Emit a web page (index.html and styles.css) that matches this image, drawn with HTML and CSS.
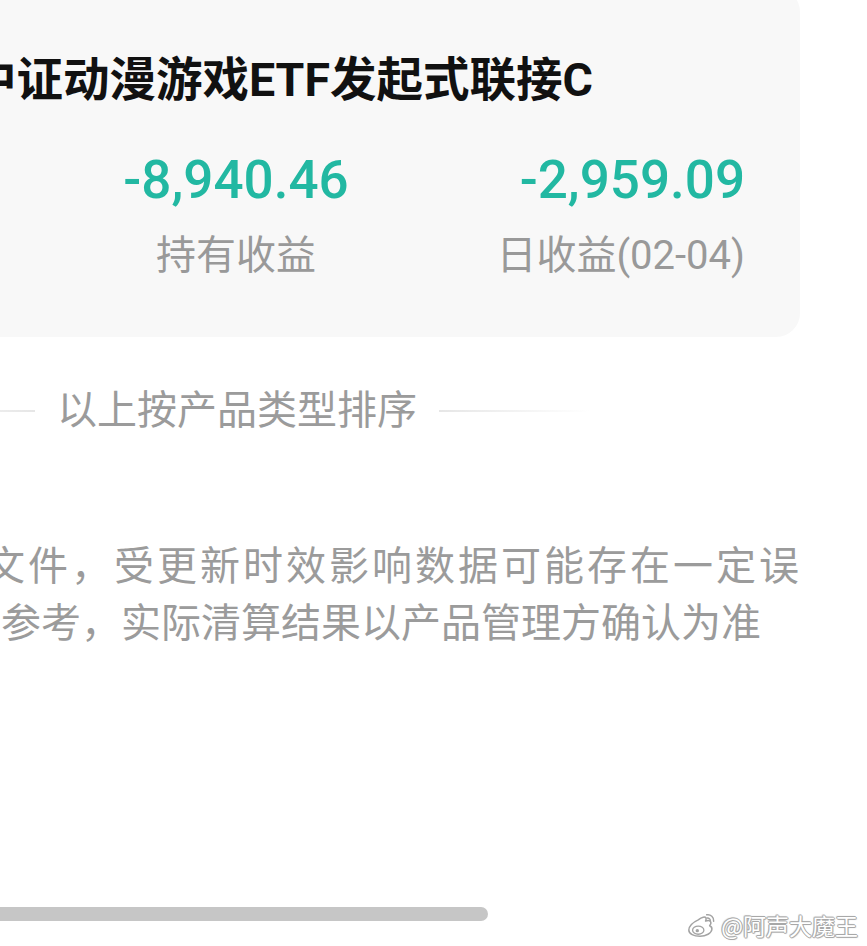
FILE: index.html
```html
<!DOCTYPE html>
<html lang="zh-CN">
<head>
<meta charset="utf-8">
<title>持仓</title>
<link rel="stylesheet" href="styles.css">
</head>
<body>
<div class="page">
  <section class="card">
    <h2 class="fund-name">中证动漫游戏ETF发起式联接C</h2>
    <div class="stats">
      <div class="stat stat-center">
        <div class="stat-value">-8,940.46</div>
        <div class="stat-label">持有收益</div>
      </div>
      <div class="stat stat-right">
        <div class="stat-value">-2,959.09</div>
        <div class="stat-label">日收益(02-04)</div>
      </div>
    </div>
  </section>

  <div class="divider">
    <span class="divider-line divider-line-left"></span>
    <span class="divider-text">以上按产品类型排序</span>
    <span class="divider-line divider-line-right"></span>
  </div>

  <div class="notice">
    <p class="notice-line notice-line-1">文件，受更新时效影响数据可能存在一定误</p>
    <p class="notice-line notice-line-2">参考，实际清算结果以产品管理方确认为准</p>
  </div>

  <div class="scrollbar"><div class="scroll-thumb"></div></div>

  <div class="watermark">
    <svg class="weibo" width="32" height="28" viewBox="0 0 34 28" aria-hidden="true">
      <path d="M13 8.5c4-3.2 7.4-3.6 8.2-1.9.4.9.1 2.1-.4 3.3 2.4-.9 4.6-.7 5.3.6.8 1.3.2 2.9-1 4.3 1.8.8 2.7 2.1 2.4 4-.5 3.8-6.2 7.2-12.6 7.2C8.3 26 3 23.6 3 19.2c0-3.3 4-8.1 10-10.7z" fill="#fff" stroke="#a3a3a3" stroke-width="1.6" stroke-linejoin="round"/>
      <ellipse cx="13" cy="19.5" rx="6" ry="4.3" fill="#fff" stroke="#a3a3a3" stroke-width="1.4"/>
      <circle cx="12" cy="20" r="1.8" fill="#a3a3a3"/>
      <path d="M22 3.2c4-.9 8 2.6 7.4 6.8" fill="none" stroke="#a3a3a3" stroke-width="1.6" stroke-linecap="round"/>
      <path d="M22.3 6.6c2-.4 3.9 1.2 3.6 3.3" fill="none" stroke="#a3a3a3" stroke-width="1.6" stroke-linecap="round"/>
    </svg>
    <span class="watermark-text">@阿声大魔王</span>
  </div>
</div>
</body>
</html>
```

FILE: styles.css
```css
html, body {
  margin: 0;
  padding: 0;
  background: #ffffff;
}

body {
  width: 867px;
  height: 946px;
  overflow: hidden;
  font-family: Roboto, "Noto Sans CJK SC", sans-serif;
}

.page {
  position: relative;
  width: 867px;
  height: 946px;
  overflow: hidden;
}

.card {
  margin-top: -12px;
  width: 745px;
  padding: 62px 55px 56px 0;
  background: #f8f8f8;
  border-radius: 0 24px 24px 0;
}

.fund-name {
  margin: 0 0 0 -30px;
  font-size: 46.5px;
  line-height: 60px;
  font-weight: 700;
  color: #111111;
  white-space: nowrap;
}

.stats {
  display: grid;
  grid-template-columns: 472px 1fr;
  margin-top: 40px;
}

.stat-center {
  text-align: center;
}

.stat-right {
  text-align: right;
}

.stat-value {
  font-size: 53px;
  line-height: 60px;
  font-weight: 500;
  color: #22b8a2;
}

.stat-label {
  margin-top: 21px;
  font-size: 40px;
  line-height: 50px;
  color: #999999;
}

.divider {
  display: flex;
  align-items: center;
  gap: 22px;
  margin: 44px 0 0 -116px;
  width: 706px;
  height: 60px;
}

.divider-line {
  flex: 1;
  height: 2px;
}

.divider-line-left {
  background: linear-gradient(to right, rgba(230, 230, 230, 0), #e6e6e6);
}

.divider-line-right {
  background: linear-gradient(to right, #e6e6e6, rgba(230, 230, 230, 0));
}

.divider-text {
  font-size: 40px;
  line-height: 60px;
  color: #9b9b9b;
  white-space: nowrap;
}

.notice {
  margin-top: 97px;
}

.notice-line {
  margin: 0;
  font-size: 40px;
  line-height: 57px;
  color: #9b9b9b;
  white-space: nowrap;
}

.notice-line-1 {
  margin-left: -15px;
  letter-spacing: 3px;
}

.notice-line-2 {
  margin-left: 1px;
}

.scrollbar {
  margin-top: 255px;
  width: 488px;
  height: 14px;
}

.scroll-thumb {
  height: 100%;
  background: #c6c6c6;
  border-radius: 0 7px 7px 0;
}

.watermark {
  position: absolute;
  right: 9px;
  bottom: 6px;
  display: flex;
  align-items: center;
  gap: 3px;
}

.watermark-text {
  font-family: "Noto Sans CJK SC", sans-serif;
  font-size: 23px;
  line-height: 30px;
  color: #ffffff;
  text-shadow:
    1px 0 0 #a8a8a8, -1px 0 0 #a8a8a8, 0 1px 0 #a8a8a8, 0 -1px 0 #a8a8a8,
    1px 1px 1px #bdbdbd, -1px -1px 1px #bdbdbd;
}
```
